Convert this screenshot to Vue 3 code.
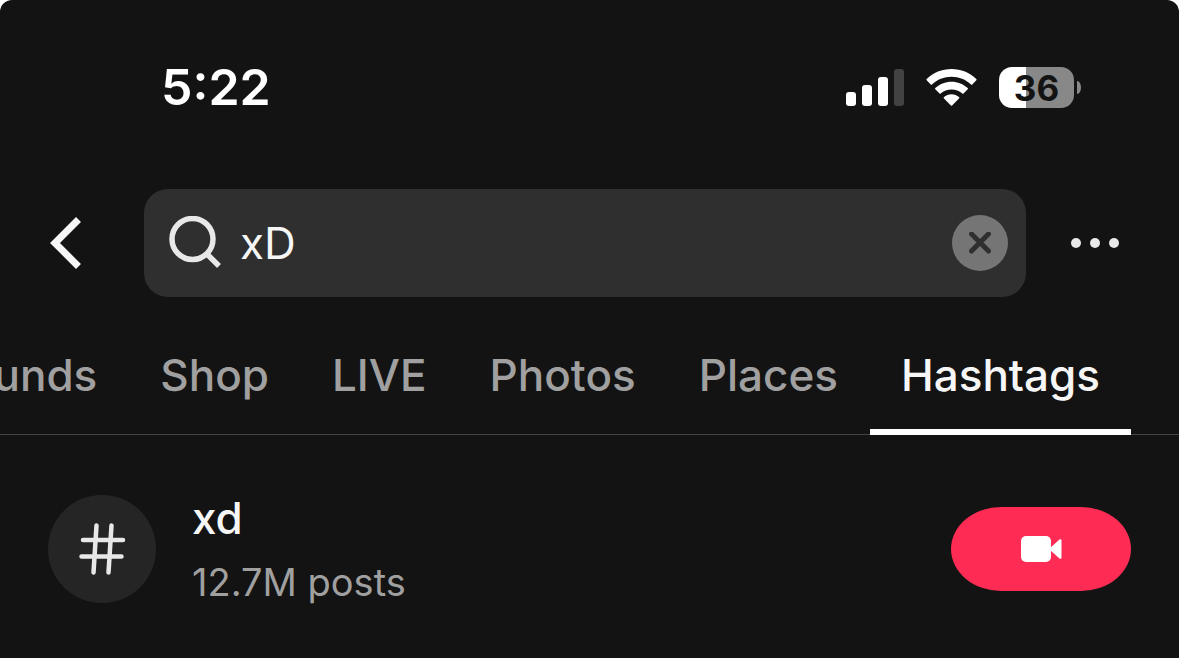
<script setup>
import { ref } from 'vue'

const query = ref('xD')
const tabs = ['Sounds', 'Shop', 'LIVE', 'Photos', 'Places', 'Hashtags']
const active = ref('Hashtags')
const results = [{ name: 'xd', posts: '12.7M posts' }]
</script>

<template>
  <div class="screen">
    <div class="status">
      <time class="clock">5:22</time>
      <div class="indicators">
        <svg class="signal" width="58" height="37" viewBox="0 0 58 37" aria-hidden="true">
          <rect x="0" y="23" width="10" height="14" rx="3" />
          <rect x="16" y="16" width="10" height="21" rx="3" />
          <rect x="32" y="8" width="10" height="29" rx="3" />
          <rect class="dim" x="48" y="0" width="10" height="37" rx="3" />
        </svg>
        <svg class="wifi" width="51" height="37" viewBox="0 0 51 37" aria-hidden="true">
          <path d="M25.500 0C16 0 7.200 3.700 .7 9.900a.9.900 0 0 0 0 1.300l4 4.200a.9.900 0 0 0 1.300 0C11.200 10.500 18 7.700 25.500 7.700S39.800 10.500 45 15.400a.9.900 0 0 0 1.300 0l4-4.200a.9.900 0 0 0 0-1.300C43.800 3.700 35 0 25.500 0Z" />
          <path d="M25.500 12.700c-6.200 0-11.900 2.400-16.200 6.300a.9.900 0 0 0 0 1.300l4.200 4.200a.9.900 0 0 0 1.200 0c2.900-2.600 6.700-4.100 10.800-4.100s7.900 1.500 10.800 4.100a.9.900 0 0 0 1.200 0l4.200-4.200a.9.900 0 0 0 0-1.300c-4.300-3.900-10-6.300-16.200-6.300Z" />
          <path d="M25.500 25.300c-2.900 0-5.500 1.100-7.500 2.800a.9.900 0 0 0 0 1.300l6.900 7.100a.9.900 0 0 0 1.200 0l6.900-7.100a.9.900 0 0 0 0-1.300c-2-1.700-4.600-2.800-7.500-2.800Z" />
        </svg>
        <div class="battery"><span class="level">36</span><i class="nub"></i></div>
      </div>
    </div>

    <form class="search-row" @submit.prevent>
      <button type="button" class="back" aria-label="Back">
        <svg width="36" height="56" viewBox="0 0 36 56"><path d="M31.500 4.500 8 28l23.500 23.500" /></svg>
      </button>
      <div class="search">
        <svg class="lens" width="54" height="54" viewBox="0 0 54 54" aria-hidden="true">
          <circle cx="24.500" cy="23" r="20.500" />
          <path d="m38.500 37.500 12.500 12.500" />
        </svg>
        <input v-model="query" type="text" aria-label="Search" />
        <button type="button" class="clear" aria-label="Clear search" @click="query = ''">
          <svg width="22" height="22" viewBox="0 0 22 22"><path d="m2.500 2 17 17m0-17-17 17" /></svg>
        </button>
      </div>
      <button type="button" class="more" aria-label="More options">
        <svg width="48" height="10" viewBox="0 0 48 10">
          <circle cx="5" cy="5" r="5" /><circle cx="24" cy="5" r="5" /><circle cx="43" cy="5" r="5" />
        </svg>
      </button>
    </form>

    <nav class="tabs" aria-label="Result types">
      <button
        v-for="tab in tabs"
        :key="tab"
        type="button"
        :class="['tab', { active: tab === active }]"
        @click="active = tab"
      >{{ tab }}</button>
    </nav>

    <ul class="results">
      <li v-for="item in results" :key="item.name" class="result">
        <span class="avatar">
          <svg width="48" height="54" viewBox="0 0 48 54" aria-hidden="true">
            <path d="m18.500 3.500-3 47M33.500 3.500l-3 47M5 18h40M3.500 34.500h40" />
          </svg>
        </span>
        <div class="info">
          <div class="name">{{ item.name }}</div>
          <div class="posts">{{ item.posts }}</div>
        </div>
        <button type="button" class="record" aria-label="Record a video">
          <svg width="41" height="26" viewBox="0 0 41 26">
            <rect width="30" height="26" rx="5" />
            <path d="M29 12 38.500 3.500Q40.500 2.500 40.500 4.500v17q0 2-2 1L29 14Z" />
          </svg>
        </button>
      </li>
    </ul>
  </div>
</template>

<style>
body {
  margin: 0;
  background: #fff;
}
</style>

<style scoped>
.screen {
  box-sizing: border-box;
  min-height: 100vh;
  overflow: hidden;
  border-radius: 12px 12px 0 0;
  background: #131313;
  color: #f6f6f6;
  font-family: Inter, "Liberation Sans", sans-serif;
}
button {
  display: flex;
  align-items: center;
  justify-content: center;
  padding: 0;
  border: 0;
  background: none;
  color: inherit;
  font-family: inherit;
}
svg {
  display: block;
  flex: none;
}
.status {
  display: flex;
  align-items: center;
  justify-content: space-between;
  padding: 58px 98px 0 161px;
}
.clock {
  color: #fff;
  font-size: 50px;
  font-weight: 600;
  line-height: 59px;
}
.indicators {
  display: flex;
  align-items: center;
  gap: 22px;
  fill: #fff;
}
.dim {
  fill: #424242;
}
.battery {
  position: relative;
  display: flex;
  align-items: center;
  justify-content: center;
  width: 75px;
  height: 41px;
  margin-right: 7px;
  border-radius: 13px;
  background: linear-gradient(to right, #fff 36%, #888 36%);
  color: #131313;
  font-size: 35px;
  font-weight: 700;
}
.nub {
  position: absolute;
  left: 78px;
  top: 14px;
  width: 4px;
  height: 13px;
  border-radius: 0 4px 4px 0 / 0 7px 7px 0;
  background: #888;
}
.search-row {
  display: flex;
  align-items: center;
  padding: 72px 60px 0 47px;
}
.back {
  margin-right: 61px;
}
.back path {
  fill: none;
  stroke: #f6f6f6;
  stroke-width: 7;
}
.search {
  display: flex;
  flex: 1;
  align-items: center;
  min-width: 0;
  height: 108px;
  box-sizing: border-box;
  padding: 0 18px 0 24px;
  border-radius: 24px;
  background: #2f2f2f;
}
.lens {
  fill: none;
  stroke: #e8e8e8;
  stroke-width: 5.5;
}
input {
  flex: 1;
  min-width: 0;
  margin: 0 18px;
  padding: 0;
  border: 0;
  outline: 0;
  background: none;
  color: #f6f6f6;
  font-family: inherit;
  font-size: 44px;
  line-height: 56px;
}
.clear {
  width: 56px;
  height: 56px;
  border-radius: 50%;
  background: #757575;
}
.clear path {
  stroke: #2f2f2f;
  stroke-width: 5;
  stroke-linecap: round;
}
.more {
  margin-left: 45px;
  fill: #e8e8e8;
}
.tabs {
  display: flex;
  justify-content: flex-end;
  gap: 1px;
  height: 138px;
  padding-right: 48px;
  box-sizing: border-box;
  box-shadow: inset 0 -1px #444;
}
.tab {
  flex: none;
  padding: 24px 31px 0;
  border-bottom: 6px solid transparent;
  color: #a0a0a0;
  font-size: 44px;
  font-weight: 500;
}
.tab.active {
  border-color: #fff;
  color: #f6f6f6;
}
.results {
  margin: 0;
  padding: 52px 48px 0;
  list-style: none;
}
.result {
  display: flex;
  align-items: center;
}
.avatar {
  display: flex;
  align-items: center;
  justify-content: center;
  width: 108px;
  height: 108px;
  margin-right: 36px;
  border-radius: 50%;
  background: #252525;
}
.avatar path {
  fill: none;
  stroke: #e8e8e8;
  stroke-width: 4.5;
  stroke-linecap: round;
}
.info {
  display: grid;
  flex: 1;
  gap: 4px;
}
.name {
  font-size: 44px;
  font-weight: 500;
  line-height: 62px;
}
.posts {
  color: #a0a0a0;
  font-size: 38px;
  line-height: 58px;
}
.record {
  width: 180px;
  height: 84px;
  border-radius: 50px / 42px;
  background: #fe2c55;
  fill: #fff;
}
</style>
